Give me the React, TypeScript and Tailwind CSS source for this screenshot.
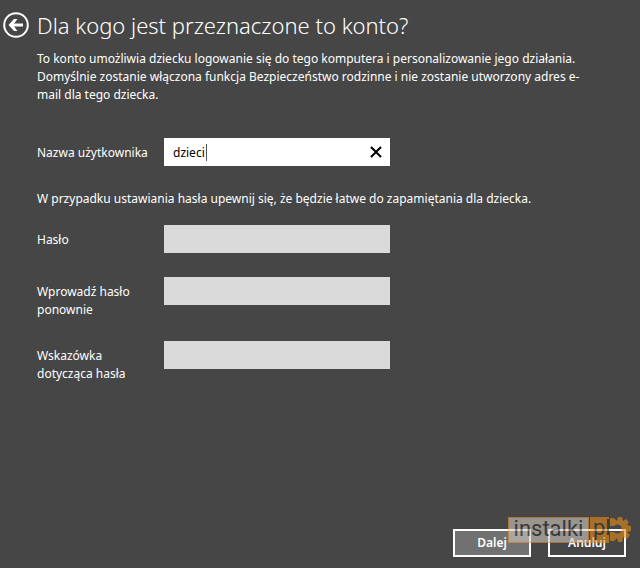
import { useState } from "react";

const fields = [
  { id: "password", label: "Hasło", type: "password", gap: "mb-6" },
  { id: "repeat", label: "Wprowadź hasło ponownie", type: "password", gap: "mb-9" },
  { id: "hint", label: "Wskazówka dotycząca hasła", type: "text", gap: "" },
];

function Watermark() {
  return (
    <div className="pointer-events-none absolute right-2 bottom-[25px] flex h-[26px] font-['Roboto',sans-serif] text-[22px] leading-[22px] text-[#303030] opacity-60">
      <div className="flex w-[81px] justify-center border border-[#e8943a] bg-[#d3cac0]">
        instalki
      </div>
      <div className="relative w-[43px] pl-1">
        <svg viewBox="0 0 43 26" className="absolute inset-0 h-full w-full" fill="#e58d16">
          <path d="M1 0H20V26H1z" />
          <path
            fillRule="evenodd"
            d="M24 1L26 2L28 4L29 0H33L34 4L37 2L40 5L38 8L42 9V14L38 15L41 18L38 22L34 20L33 25H29L28 21L25 24H21V15H25A4.500 4.500 0 1 0 25 9H21V1z"
          />
        </svg>
        <span className="relative">pl</span>
      </div>
    </div>
  );
}

export default function App() {
  const [name, setName] = useState("dzieci");

  return (
    <main className="relative flex min-h-screen flex-col bg-[#464646] font-['Noto_Sans',sans-serif] text-[12px] leading-[18px] text-white">
      <header className="flex items-center gap-2 pt-2 pl-[3px]">
        <button type="button" aria-label="Wstecz" className="shrink-0">
          <svg viewBox="0 0 26 26" className="size-[26px]" fill="none" stroke="#fff">
            <circle cx="13" cy="13" r="11.8" strokeWidth="2" />
            <path d="M20 13H8" strokeWidth="3" />
            <path d="M11 7H14.500L10 13L14.500 19H11L5.500 13z" fill="#fff" stroke="none" />
          </svg>
        </button>
        <h1 className="text-[22px] leading-[34px] font-light">
          Dla kogo jest przeznaczone to konto?
        </h1>
      </header>

      <form className="flex grow flex-col pt-2 pr-[14px] pl-[37px]">
        <p className="max-w-[560px]">
          To konto umożliwia dziecku logowanie się do tego komputera i personalizowanie jego
          działania. Domyślnie zostanie włączona funkcja Bezpieczeństwo rodzinne i nie zostanie
          utworzony adres e-mail dla tego dziecka.
        </p>

        <div className="mt-[34px] flex items-start">
          <label htmlFor="name" className="w-[127px] shrink-0 pt-[6px]">
            Nazwa użytkownika
          </label>
          <div className="flex h-7 w-[226px] items-center bg-white text-black">
            <div className="grid grow items-center">
              <input
                id="name"
                value={name}
                onChange={(e) => setName(e.target.value)}
                className="col-start-1 row-start-1 h-7 w-full min-w-0 pl-[9px] outline-none"
              />
              {/* caret */}
              <span className="pointer-events-none col-start-1 row-start-1 ml-[42px] h-[17px] w-px bg-[#555]" />
            </div>
            <button
              type="button"
              aria-label="Wyczyść"
              onClick={() => setName("")}
              className="flex h-7 w-7 items-center justify-center"
            >
              <svg viewBox="0 0 12 12" className="size-3" stroke="#000" strokeWidth="2">
                <path d="M1 1L11 11M11 1L1 11" />
              </svg>
            </button>
          </div>
        </div>

        <p className="mt-6 mb-[17px]">
          W przypadku ustawiania hasła upewnij się, że będzie łatwe do zapamiętania dla dziecka.
        </p>

        {fields.map((f) => (
          <div key={f.id} className={`flex h-7 items-start ${f.gap}`}>
            <label htmlFor={f.id} className="w-[127px] shrink-0 pt-[6px] pr-5">
              {f.label}
            </label>
            <input
              id={f.id}
              type={f.type}
              className="h-7 w-[226px] bg-[#dadada] px-2 text-black outline-none"
            />
          </div>
        ))}

        <div className="mt-auto mb-[11px] flex justify-end gap-[17px] pt-12 font-semibold">
          <button type="submit" className="h-7 w-[78px] border-2 border-white bg-[#717171]">
            Dalej
          </button>
          <button type="button" className="h-7 w-[78px] border-2 border-white">
            Anuluj
          </button>
        </div>
      </form>

      <Watermark />
    </main>
  );
}
